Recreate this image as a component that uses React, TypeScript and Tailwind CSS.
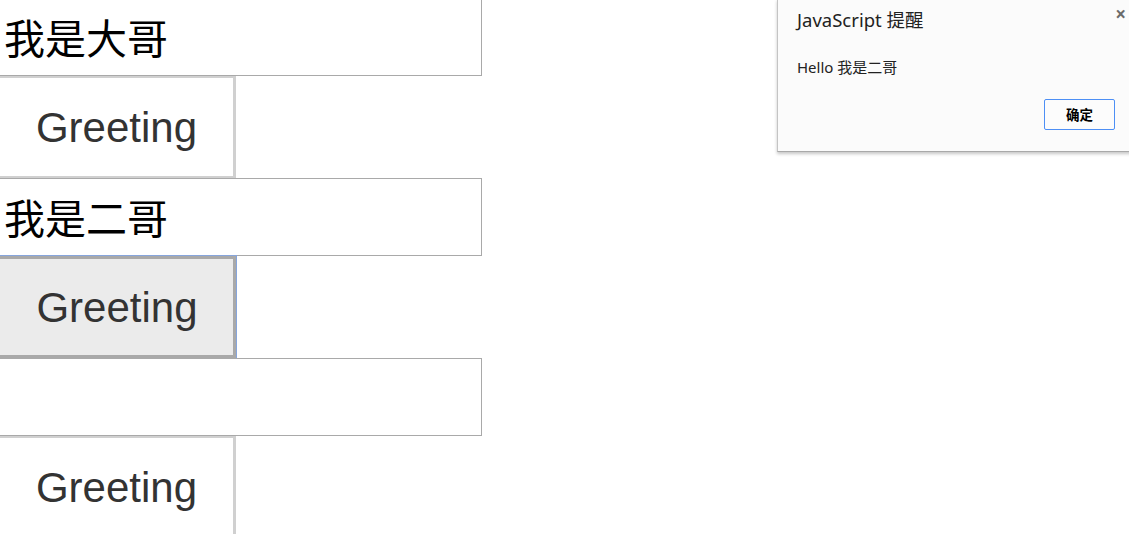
import { useState } from 'react'

type Row = { value: string; pressed?: boolean }

const rows: Row[] = [
  { value: '我是大哥' },
  { value: '我是二哥', pressed: true },
  { value: '' },
]

function Greeter({ value, pressed }: Row) {
  const [text, setText] = useState(value)
  return (
    <>
      <input
        value={text}
        onChange={e => setText(e.target.value)}
        className="box-border h-[78px] w-[485px] border border-[#a9a9a9] bg-white pb-[3px] pl-[6px] text-[41px] leading-none text-black outline-none"
        style={{ fontFamily: '"Noto Sans CJK SC", "Noto Sans CJK TC", sans-serif' }}
      />
      <button
        className={
          pressed
            ? 'box-border h-[102px] w-[239px] border-[3px] border-[#a9a9a9] bg-[#ebebeb] pl-[1px] text-[42px] text-[#333] outline outline-1 outline-[#86a5dc]'
            : 'box-border h-[102px] w-[239px] border-[2px] border-r-[3px] border-[#d0d0d0] bg-white pl-[1px] text-[42px] text-[#333]'
        }
        style={{ fontFamily: '"Liberation Sans", Arial, sans-serif' }}
      >
        Greeting
      </button>
    </>
  )
}

function AlertBox() {
  return (
    <div
      className="absolute left-[777px] top-[-1px] h-[153px] w-[360px] border border-[#c4c4c4] border-b-[#a9a9a9] bg-[#fbfbfb] shadow-[0_2px_3px_rgba(0,0,0,0.22)]"
      style={{ fontFamily: '"Noto Sans", "Noto Sans CJK SC", sans-serif' }}
    >
      <div className="absolute right-[10px] top-[0px] text-[19px] font-bold text-[#6b6b6b]">×</div>
      <div className="pl-[19px] pt-[6px] text-[18.5px] text-[#222]">JavaScript 提醒</div>
      <div className="pl-[19px] pt-[22px] text-[15px] text-[#222]">Hello 我是二哥</div>
      <div className="flex justify-end pr-[21px] pt-[21px]">
        <button className="flex h-[31px] w-[71px] items-center justify-center rounded-[2px] border border-[#4d8ff5] bg-[#fcfcfc] text-[13.5px] font-bold text-black">
          确定
        </button>
      </div>
    </div>
  )
}

export default function App() {
  return (
    <div className="relative h-[534px] w-full overflow-hidden bg-white">
      <div className="-ml-[3px] -mt-[2px] flex flex-col items-start">
        {rows.map((r, i) => (
          <Greeter key={i} {...r} />
        ))}
      </div>
      <AlertBox />
    </div>
  )
}
